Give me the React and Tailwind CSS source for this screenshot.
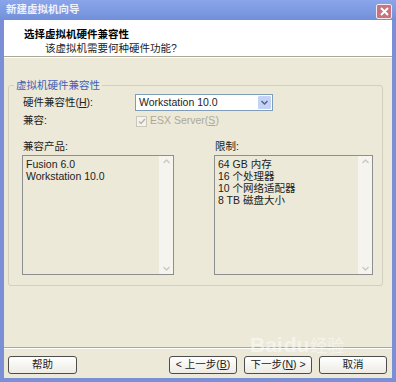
function Chevron({ up, className }) {
  return (
    <svg width="7" height="5" viewBox="0 0 7 5" className={className}>
      <path
        d={up ? "M0.5 4 L3.5 1 L6.5 4" : "M0.5 1 L3.5 4 L6.5 1"}
        fill="none"
        stroke="currentColor"
        strokeWidth="1.3"
      />
    </svg>
  );
}

function ListBox({ width, items }) {
  return (
    <div
      className={`flex h-[120px] border border-[#8e8e8e] bg-[#ece9d8] ${width}`}
    >
      <div className="flex-1 px-[3px] pt-[2px] leading-[12px]">
        {items.map((item) => (
          <div key={item}>{item}</div>
        ))}
      </div>
      <div className="flex w-[14px] flex-col justify-between bg-[#f5f4ee] py-[3px] text-[#c9c8c0]">
        <div className="flex justify-center">
          <Chevron up />
        </div>
        <div className="flex justify-center">
          <Chevron />
        </div>
      </div>
    </div>
  );
}

function XpButton({ children, width = "w-[68px]" }) {
  return (
    <button
      className={`flex h-[18px] items-center justify-center rounded-[3px] border border-[#4d4d4d] bg-gradient-to-b from-[#ffffff] to-[#ecebe4] text-[#222] ${width}`}
    >
      {children}
    </button>
  );
}

export default function App() {
  return (
    <div
      className="relative flex h-[382px] w-[396px] flex-col bg-[#7a8fd6] text-[10.5px] text-[#222]"
      style={{ fontFamily: '"Liberation Sans", "Noto Sans CJK SC", sans-serif' }}
    >
      {/* title bar */}
      <div className="flex h-[20px] items-center justify-between bg-gradient-to-b from-[#8aa5ea] to-[#7290da] pl-[6px] pr-[4px]">
        <span className="font-bold text-[#eef2fd]">新建虚拟机向导</span>
        <div className="mt-[2px] flex h-[15px] w-[16px] items-center justify-center rounded-[2px] border border-[#f2e8ee] bg-[#c9737f]">
          <svg width="9" height="9" viewBox="0 0 9 9">
            <path d="M1 1 L8 8 M8 1 L1 8" stroke="#fff" strokeWidth="2" />
          </svg>
        </div>
      </div>

      <div className="mx-[4px] mb-[4px] flex flex-1 flex-col bg-[#ece9d8]">
        {/* header */}
        <div className="flex h-[37px] flex-col border-b border-[#aca899] bg-white pt-[8px]">
          <div className="pl-[20px] font-bold leading-[13px] text-black">
            选择虚拟机硬件兼容性
          </div>
          <div className="pl-[41px] leading-[14px]">该虚拟机需要何种硬件功能?</div>
        </div>
        <div className="h-[1px] bg-white" />

        {/* group box */}
        <div className="relative ml-[4px] mr-[9px] mt-[27px] h-[201px] rounded-[3px] border border-[#d3cfbe]">
          <span className="absolute -top-[7px] left-[5px] bg-[#ece9d8] px-[2px] leading-[12px] text-[#3a61b6]">
            虚拟机硬件兼容性
          </span>
          <div className="flex flex-col pl-[13px] pt-[8px]">
            <div className="flex h-[17px] items-center">
              <span className="ml-[1px] w-[112px]">硬件兼容性(<u>H</u>):</span>
              <div className="flex h-[17px] w-[138px] items-center border border-[#7f9db9] bg-white">
                <span className="flex-1 pl-[3px]">Workstation 10.0</span>
                <div className="mr-[1px] flex h-[13px] w-[13px] items-center justify-center rounded-[1px] bg-[#c4d2f6] text-[#4d6185]">
                  <Chevron />
                </div>
              </div>
            </div>
            <div className="mt-[2px] flex h-[16px] items-center">
              <span className="ml-[1px] w-[112px]">兼容:</span>
              <div className="ml-[1px] flex h-[11px] w-[11px] items-center justify-center border border-[#c9c7ba] bg-[#f4f3ee] text-[#b8b6a8]">
                <svg width="8" height="7" viewBox="0 0 8 7">
                  <path d="M1 3.5 L3 5.5 L7 1" fill="none" stroke="currentColor" strokeWidth="1.5" />
                </svg>
              </div>
              <span className="ml-[3px] text-[#aca899]">
                ESX Server(<u>S</u>)
              </span>
            </div>
            <div className="mt-[11px] flex">
              <span className="ml-[1px] w-[192px] leading-[12px]">兼容产品:</span>
              <span className="leading-[12px]">限制:</span>
            </div>
            <div className="mt-[3px] flex gap-[40px]">
              <ListBox width="w-[152px]" items={["Fusion 6.0", "Workstation 10.0"]} />
              <ListBox
                width="w-[159px]"
                items={["64 GB 内存", "16 个处理器", "10 个网络适配器", "8 TB 磁盘大小"]}
              />
            </div>
          </div>
        </div>

        <div className="flex-1" />
        <div className="h-[1px] bg-[#aca899]" />
        <div className="h-[1px] bg-white" />

        {/* buttons */}
        <div className="flex pb-[4px] pl-[4px] pr-[5px] pt-[7px]">
          <XpButton width="w-[69px]">帮助</XpButton>
          <div className="flex-1" />
          <div className="flex gap-[7px]">
            <XpButton>&lt; 上一步(<u>B</u>)</XpButton>
            <XpButton>下一步(<u>N</u>) &gt;</XpButton>
            <XpButton>取消</XpButton>
          </div>
        </div>
      </div>

      {/* watermark */}
      <div className="pointer-events-none absolute left-[250px] top-[334px] flex items-end text-[21px] font-bold leading-none text-white opacity-50">
        <span>Bai</span>
        <span className="mx-[1px]">du</span>
        <span className="text-[17px] font-normal">经验</span>
      </div>
    </div>
  );
}
